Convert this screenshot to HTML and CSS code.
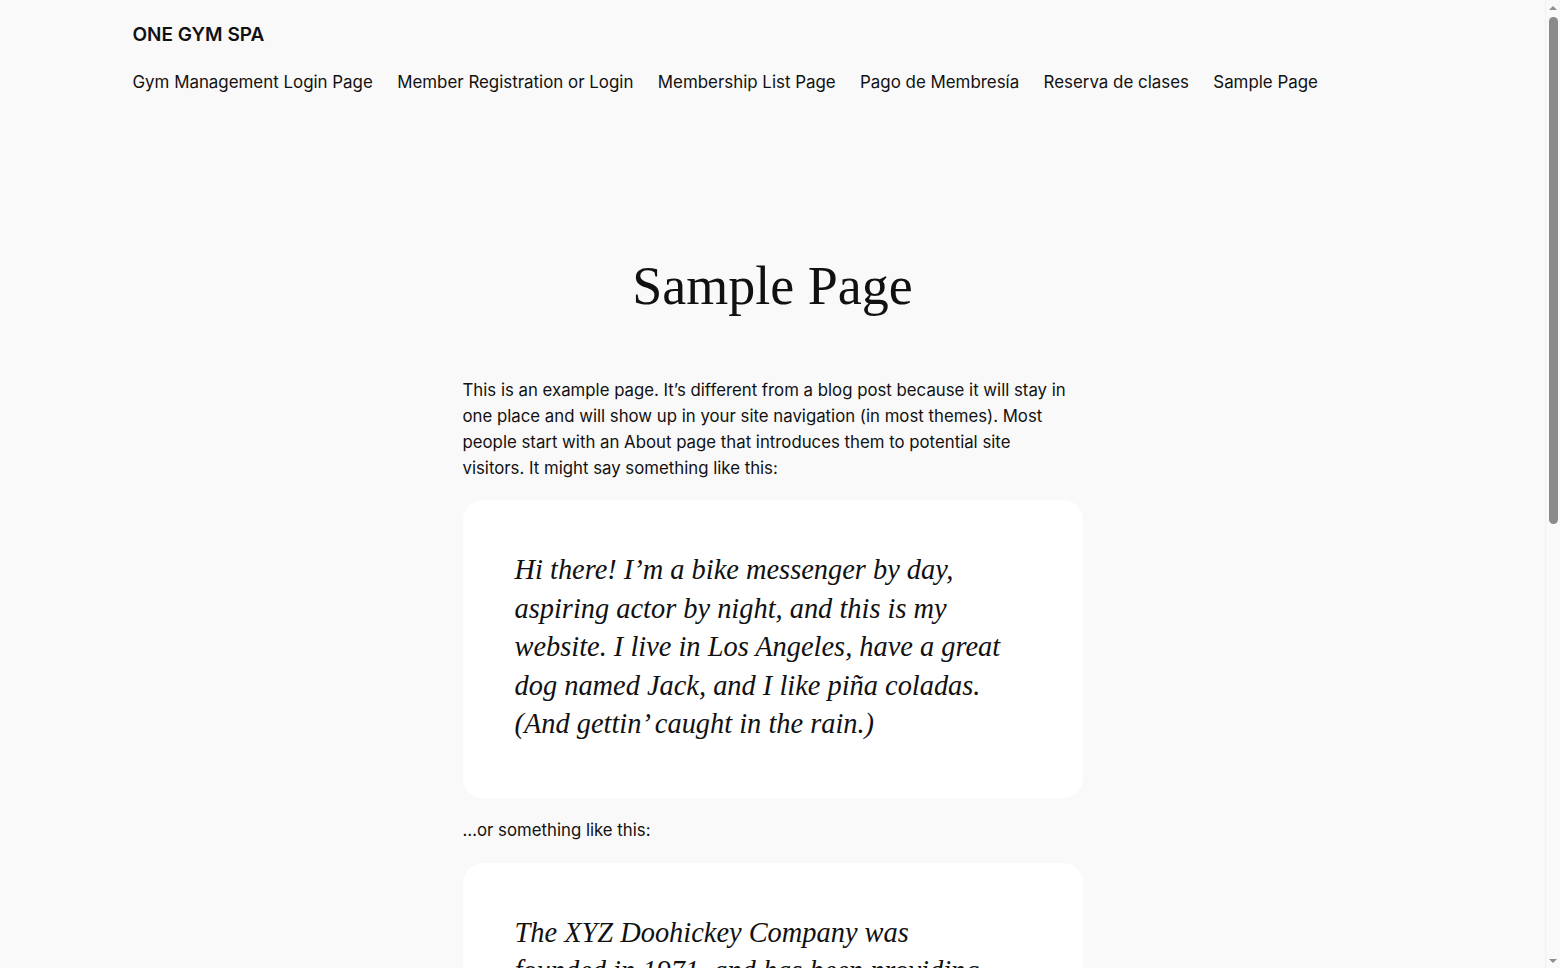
FILE: index.html
```html
<!DOCTYPE html>
<html lang="en">
<head>
<meta charset="utf-8">
<title>Sample Page – ONE GYM SPA</title>
<link rel="stylesheet" href="styles.css">
</head>
<body>
<header class="site-header">
  <div class="header-inner">
    <p class="site-title"><a href="#">ONE GYM SPA</a></p>
    <nav class="main-nav">
      <a href="#">Gym Management Login Page</a>
      <a href="#">Member Registration or Login</a>
      <a href="#">Membership List Page</a>
      <a href="#">Pago de Membresía</a>
      <a href="#">Reserva de clases</a>
      <a href="#">Sample Page</a>
    </nav>
  </div>
</header>

<main class="site-main">
  <h1 class="page-title">Sample Page</h1>
  <div class="entry-content">
    <p>This is an example page. It’s different from a blog post because it will stay in one place and will show up in your site navigation (in most themes). Most people start with an About page that introduces them to potential site visitors. It might say something like this:</p>
    <blockquote class="quote"><p>Hi there! I’m a bike messenger by day, aspiring actor by night, and this is my website. I live in Los Angeles, have a great dog named Jack, and I like piña coladas. (And gettin’ caught in the rain.)</p></blockquote>
    <p>…or something like this:</p>
    <blockquote class="quote"><p>The XYZ Doohickey Company was founded in 1971, and has been providing quality doohickeys to the public ever since. Located in Gotham City, XYZ employs over 2,000 people and does all kinds of awesome things for the Gotham community.</p></blockquote>
    <p>As a new WordPress user, you should go to <a href="#">your dashboard</a> to delete this page and create new pages for your content. Have fun!</p>
  </div>
</main>

<footer class="site-footer">
  <div class="footer-inner">
    <div class="footer-brand">
      <p class="footer-title">ONE GYM SPA</p>
      <p class="footer-tagline">Just another WordPress site</p>
    </div>
    <div class="footer-cols">
      <div class="footer-col">
        <h2>About</h2>
        <a href="#">Team</a><a href="#">History</a><a href="#">Careers</a>
      </div>
      <div class="footer-col">
        <h2>Privacy</h2>
        <a href="#">Privacy Policy</a><a href="#">Terms and Conditions</a><a href="#">Contact Us</a>
      </div>
      <div class="footer-col">
        <h2>Social</h2>
        <a href="#">Facebook</a><a href="#">Instagram</a><a href="#">Twitter/X</a>
      </div>
    </div>
  </div>
  <p class="credit">Designed with <a href="#">WordPress</a></p>
</footer>

<div class="scrollbar" aria-hidden="true">
  <span class="sb-arrow sb-up"></span>
  <span class="sb-thumb"></span>
  <span class="sb-arrow sb-down"></span>
</div>
</body>
</html>
```

FILE: styles.css
```css
html, body {
  margin: 0;
  padding: 0;
}
body {
  background: #f9f9f9;
  color: #111111;
  font-family: Inter, "Noto Sans", sans-serif;
  font-size: 16.8px;
  line-height: 26px;
  margin-right: 15px;
}
a {
  color: inherit;
  text-decoration: none;
}
p { margin: 0; }

.site-header {
  padding: 22px 0 0;
}
.header-inner {
  max-width: 1280px;
  margin: 0 auto;
  display: flex;
  flex-direction: column;
  gap: 21px;
}
.site-title {
  font-size: 19px;
  font-weight: 600;
  line-height: 26px;
}
.main-nav {
  display: flex;
  flex-wrap: wrap;
  gap: 24.4px;
  font-size: 16.9px;
  line-height: 26px;
}

.site-main {
  padding-top: 159px;
  padding-bottom: 120px;
}
.page-title {
  margin: 0 auto;
  text-align: center;
  font-family: "Liberation Serif", "Times New Roman", serif;
  font-weight: 400;
  font-size: 54px;
  line-height: 1.2;
}
.entry-content {
  max-width: 620px;
  margin: 58px auto 0;
  display: flex;
  flex-direction: column;
  gap: 19.5px;
}
.entry-content > p {
  max-width: 608px;
}
.entry-content a {
  text-decoration: underline;
}
.quote {
  margin: 0;
  background: #ffffff;
  border-radius: 20px;
  padding: 51px 52px 54px;
  font-family: "Liberation Serif", "Times New Roman", serif;
  font-style: italic;
  font-size: 28.4px;
  line-height: 38.5px;
}
.quote p {
  max-width: 490px;
}

.site-footer {
  max-width: 1280px;
  margin: 0 auto;
  padding: 80px 0 60px;
}
.footer-inner {
  display: flex;
  justify-content: space-between;
  gap: 40px;
}
.footer-title {
  font-weight: 600;
  font-size: 18px;
}
.footer-tagline {
  font-size: 15px;
  color: #555;
}
.footer-cols {
  display: flex;
  gap: 80px;
}
.footer-col {
  display: flex;
  flex-direction: column;
  gap: 8px;
  font-size: 15px;
}
.footer-col h2 {
  margin: 0 0 8px;
  font-size: 15px;
  font-weight: 600;
}
.credit {
  margin-top: 80px;
  font-size: 15px;
  color: #555;
}
.credit a { text-decoration: underline; }

.scrollbar {
  position: fixed;
  top: 0;
  right: 0;
  bottom: 0;
  width: 15px;
  background: #f9f9f9;
  border-left: 1px solid #f1f1f1;
  box-sizing: border-box;
}
.sb-thumb {
  position: absolute;
  top: 17px;
  left: 3px;
  width: 9px;
  height: 507px;
  border-radius: 5px;
  background: #8a8a8a;
}
.sb-arrow {
  position: absolute;
  left: 3px;
  width: 0;
  height: 0;
  border-left: 4.5px solid transparent;
  border-right: 4.5px solid transparent;
}
.sb-up {
  top: 6px;
  border-bottom: 4px solid #8f8f8f;
}
.sb-down {
  bottom: 5px;
  border-top: 4px solid #8f8f8f;
}
```
